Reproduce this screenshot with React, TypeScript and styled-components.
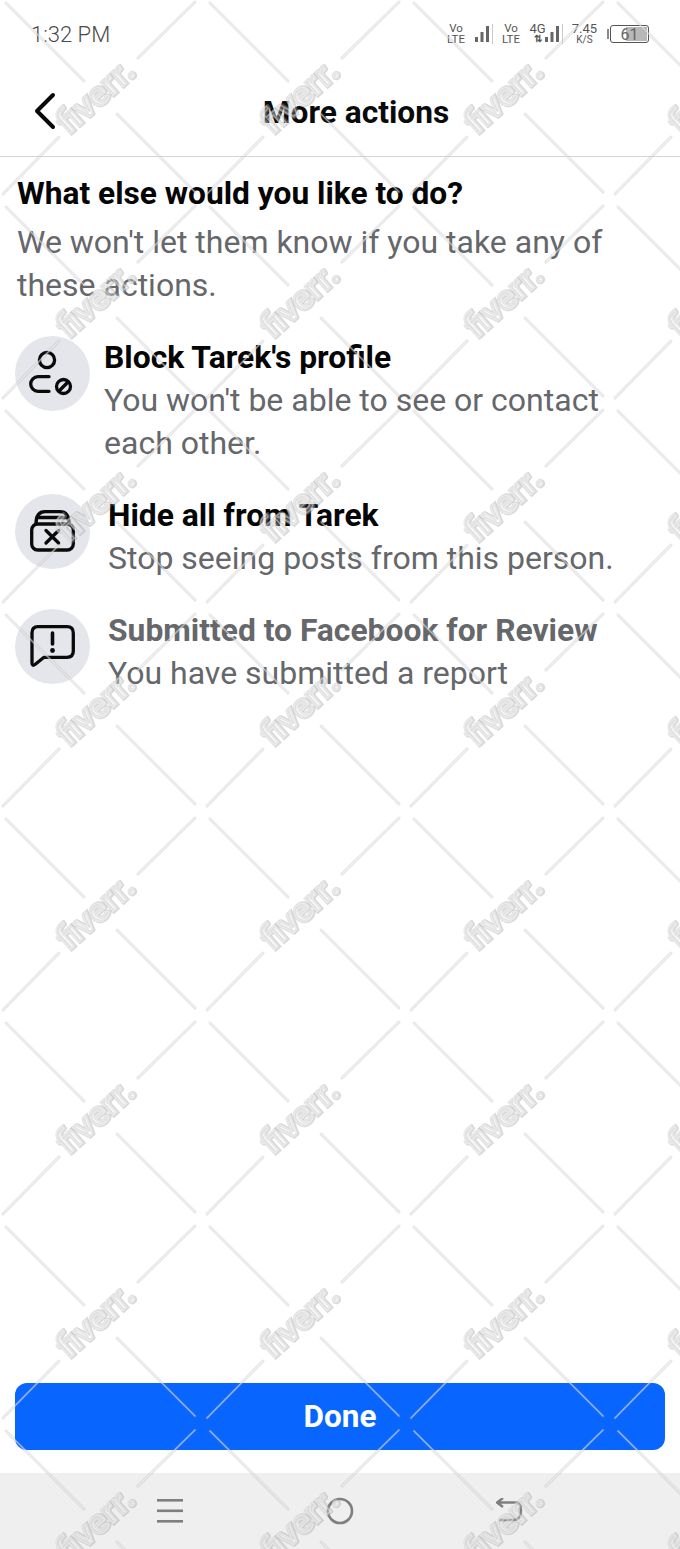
import styled, { createGlobalStyle } from "styled-components";

const GlobalStyle = createGlobalStyle`
  html, body {
    margin: 0;
    padding: 0;
    background: #fff;
  }
  body {
    font-family: Roboto, "Liberation Sans", sans-serif;
  }
`;

const App = () => {
  return (
    <Page>
      <GlobalStyle />
      <StatusBar>
        <Time>1:32 PM</Time>
        <StatusIcons>
          <Volte>
            <span>Vo</span>
            <span>LTE</span>
          </Volte>
          <Bars />
          <Divider />
          <Volte>
            <span>Vo</span>
            <span>LTE</span>
          </Volte>
          <NetType>
            <span>4G</span>
            <small>⇅</small>
          </NetType>
          <Bars />
          <Divider />
          <Speed>
            <span>7.45</span>
            <small>K/S</small>
          </Speed>
          <BatteryNub />
          <Battery>
            <BatteryFill />
            <BatteryText>61</BatteryText>
          </Battery>
        </StatusIcons>
      </StatusBar>

      <Header>
        <BackIcon viewBox="0 0 24 40" fill="none">
          <path
            d="M21 4 L5 20 L21 36"
            stroke="#0a0a0a"
            strokeWidth="4"
            strokeLinecap="round"
            strokeLinejoin="round"
          />
        </BackIcon>
        <Title>More actions</Title>
      </Header>

      <Content>
        <Intro>
          <IntroHeading>What else would you like to do?</IntroHeading>
          <Description>
            We won't let them know if you take any of these actions.
          </Description>
        </Intro>

        <Row $gap={14}>
          <IconCircle>
            <BlockIcon />
          </IconCircle>
          <RowText>
            <RowHeading>Block Tarek's profile</RowHeading>
            <Description>
              You won't be able to see or contact each other.
            </Description>
          </RowText>
        </Row>

        <Row $gap={18}>
          <IconCircle>
            <HideIcon />
          </IconCircle>
          <RowText>
            <RowHeading>Hide all from Tarek</RowHeading>
            <Description>Stop seeing posts from this person.</Description>
          </RowText>
        </Row>

        <Row $gap={18}>
          <IconCircle>
            <ReportIcon />
          </IconCircle>
          <RowText>
            <RowHeading $muted>Submitted to Facebook for Review</RowHeading>
            <Description>You have submitted a report</Description>
          </RowText>
        </Row>
      </Content>

      <DoneButton>Done</DoneButton>

      <NavBar>
        <NavItem>
          <svg width="26" height="24" viewBox="0 0 26 24" fill="#7f7f7f">
            <rect x="0" y="0" width="26" height="2.6" />
            <rect x="0" y="10.5" width="26" height="2.6" />
            <rect x="0" y="21" width="26" height="2.6" />
          </svg>
        </NavItem>
        <NavItem>
          <svg width="28" height="28" viewBox="0 0 28 28" fill="none">
            <circle cx="14" cy="14" r="12" stroke="#7f7f7f" strokeWidth="2.6" />
          </svg>
        </NavItem>
        <NavItem>
          <svg width="28" height="26" viewBox="0 0 28 26" fill="none">
            <path
              d="M7 0 L1 4.5 L7 9 M1.5 4.5 H19 Q25 4.5 25 12 Q25 22 17 22 H3"
              stroke="#7f7f7f"
              strokeWidth="2.4"
            />
          </svg>
        </NavItem>
      </NavBar>

      <Watermark />
    </Page>
  );
};

export default App;

const Bars = () => (
  <svg width="14" height="18" viewBox="0 0 14 18" fill="#666">
    <rect x="0" y="12" width="3" height="5" />
    <rect x="5.5" y="7" width="3" height="10" />
    <rect x="11" y="1" width="3" height="16" />
  </svg>
);

const BlockIcon = () => (
  <svg width="75" height="75" viewBox="0 0 75 75" fill="none">
    <g stroke="#0a0a0a" strokeWidth="3.3" strokeLinecap="round">
      <circle cx="32" cy="24" r="7.6" />
      <path d="M34 40.7 H23 a7.3 7.3 0 0 0 0 14.6 H34" />
      <circle cx="48.5" cy="50.5" r="7" />
      <path d="M45 54 L52 47" />
    </g>
  </svg>
);

const HideIcon = () => (
  <svg width="75" height="75" viewBox="0 0 75 75" fill="none">
    <g
      stroke="#0a0a0a"
      strokeWidth="3.3"
      strokeLinecap="round"
      strokeLinejoin="round"
    >
      <rect x="16.7" y="30" width="41.6" height="26" rx="6" />
      <path d="M21 30 Q21 17.7 30 17.7 H45 Q54 17.7 54 30" />
      <path d="M22 23.5 H53" />
      <path d="M31 36.5 L43.6 49 M43.6 36.5 L31 49" />
    </g>
  </svg>
);

const ReportIcon = () => (
  <svg width="75" height="75" viewBox="0 0 75 75" fill="none">
    <path
      d="M23 17.7 H52 Q58.3 17.7 58.3 24 V42 Q58.3 48.3 52 48.3 H29 L20 55.5 Q17 57.5 17 54 V24 Q17 17.7 23 17.7 Z"
      stroke="#0a0a0a"
      strokeWidth="3.3"
      strokeLinejoin="round"
    />
    <path
      d="M37.5 24 V35"
      stroke="#0a0a0a"
      strokeWidth="3.6"
      strokeLinecap="round"
    />
    <circle cx="37.5" cy="41.5" r="2.4" fill="#0a0a0a" />
  </svg>
);

const Watermark = () => (
  <WatermarkLayer width="680" height="1549">
    <defs>
      <pattern
        id="fiverr-tile"
        x="0"
        y="0"
        width="204"
        height="204"
        patternUnits="userSpaceOnUse"
      >
        {[
          "M3 194 L59 137",
          "M117 114 L195 192",
          "M6 3 L84 81",
          "M138 58 L195 2",
        ].map((d) => (
          <g key={d} strokeLinecap="round" fill="none">
            <path d={d} stroke="#8f8f8f" strokeOpacity="0.26" strokeWidth="3" />
            <path d={d} stroke="#ffffff" strokeOpacity="0.5" strokeWidth="1.2" />
          </g>
        ))}
        <WatermarkShadow x="95.6" y="108.6" transform="rotate(-42 95 97)">
          fiverr.
        </WatermarkShadow>
        <WatermarkText x="95" y="108" transform="rotate(-42 95 97)">
          fiverr.
        </WatermarkText>
      </pattern>
    </defs>
    <rect width="680" height="1549" fill="url(#fiverr-tile)" />
  </WatermarkLayer>
);

const Page = styled.div`
  position: relative;
  width: 680px;
  height: 1549px;
  overflow: hidden;
  display: flex;
  flex-direction: column;
  background: #fff;
`;

const StatusBar = styled.div`
  height: 68px;
  box-sizing: border-box;
  padding: 0 31px;
  display: flex;
  align-items: center;
  justify-content: space-between;
`;

const Time = styled.div`
  font-size: 22px;
  font-weight: 300;
  color: #4a4a4a;
`;

const StatusIcons = styled.div`
  display: flex;
  align-items: center;
  color: #555;
`;

const Volte = styled.div`
  width: 20px;
  margin-right: 9px;
  display: flex;
  flex-direction: column;
  align-items: center;
  font-size: 11.5px;
  line-height: 11px;
`;

const NetType = styled.div`
  width: 15px;
  display: flex;
  flex-direction: column;
  align-items: center;
  font-size: 13px;
  line-height: 10px;

  small {
    font-size: 10px;
    font-weight: 700;
  }
`;

const Divider = styled.div`
  width: 1px;
  height: 20px;
  margin: 0 8px 0 3px;
  background: #c9c9c9;
`;

const Speed = styled.div`
  width: 27px;
  margin-right: 9px;
  display: flex;
  flex-direction: column;
  align-items: center;
  font-size: 13px;
  line-height: 11px;

  small {
    font-size: 10px;
  }
`;

const BatteryNub = styled.div`
  width: 2px;
  height: 10px;
  margin-right: 1px;
  background: #888;
`;

const Battery = styled.div`
  position: relative;
  width: 39px;
  height: 18px;
  box-sizing: border-box;
  border: 1.5px solid #555;
  border-radius: 3px;
  display: flex;
  align-items: center;
  justify-content: center;
`;

const BatteryFill = styled.div`
  position: absolute;
  top: 1px;
  right: 1px;
  bottom: 1px;
  width: 21px;
  background: #b8b8b8;
`;

const BatteryText = styled.span`
  position: relative;
  font-size: 16px;
  color: #666;
`;

const Header = styled.div`
  height: 89px;
  box-sizing: border-box;
  padding: 0 0 0 32px;
  display: flex;
  align-items: center;
  border-bottom: 1.5px solid #d4d4d4;
`;

const BackIcon = styled.svg`
  width: 24px;
  height: 40px;
  margin: -2px -24px 0 0;
`;

const Title = styled.div`
  flex: 1;
  text-align: center;
  font-size: 31.7px;
  font-weight: 700;
  color: #0a0a0a;
`;

const Content = styled.div`
  flex: 1;
  padding: 16px 15px 0;
  display: flex;
  flex-direction: column;
  gap: 30px;
`;

const Intro = styled.div`
  padding-left: 2px;
`;

const Heading = styled.div<{ $muted?: boolean }>`
  font-size: 31.7px;
  line-height: 41px;
  font-weight: 700;
  color: ${(p) => (p.$muted ? "#65676b" : "#050505")};
`;

const IntroHeading = styled(Heading)`
  margin-bottom: 7px;
`;

const RowHeading = styled(Heading)`
  font-size: 31.8px;
  line-height: 40px;
  margin-bottom: 2px;
`;

const Description = styled.div`
  font-size: 32px;
  line-height: 43px;
  color: #65676b;
`;

const Row = styled.div<{ $gap: number }>`
  display: flex;
  align-items: flex-start;
  gap: ${(p) => p.$gap}px;
`;

const IconCircle = styled.div`
  flex: 0 0 75px;
  width: 75px;
  height: 75px;
  margin-top: -1px;
  border-radius: 50%;
  background: #e4e6eb;
`;

const RowText = styled.div`
  flex: 1;
  min-width: 0;
`;

const DoneButton = styled.button`
  height: 67px;
  margin: 0 15px 23px;
  border: none;
  border-radius: 12px;
  background: #0866ff;
  color: #fff;
  font-family: inherit;
  font-size: 31.5px;
  font-weight: 700;
`;

const NavBar = styled.div`
  height: 76px;
  box-sizing: border-box;
  padding: 0 85px;
  display: grid;
  grid-template-columns: repeat(3, 170px);
  background: #efefef;
`;

const NavItem = styled.div`
  display: flex;
  align-items: center;
  justify-content: center;
`;

const WatermarkLayer = styled.svg`
  position: absolute;
  top: 0;
  left: 0;
  pointer-events: none;
`;

const WatermarkText = styled.text`
  font-family: Lato, "Liberation Sans", sans-serif;
  font-size: 35px;
  font-weight: 900;
  text-anchor: middle;
  fill: #ffffff;
  fill-opacity: 0.2;
  stroke: #ffffff;
  stroke-opacity: 0.35;
  stroke-width: 1.6px;
`;

const WatermarkShadow = styled(WatermarkText)`
  fill: none;
  stroke: #a0a0a0;
  stroke-opacity: 0.4;
  stroke-width: 3.6px;
`;
